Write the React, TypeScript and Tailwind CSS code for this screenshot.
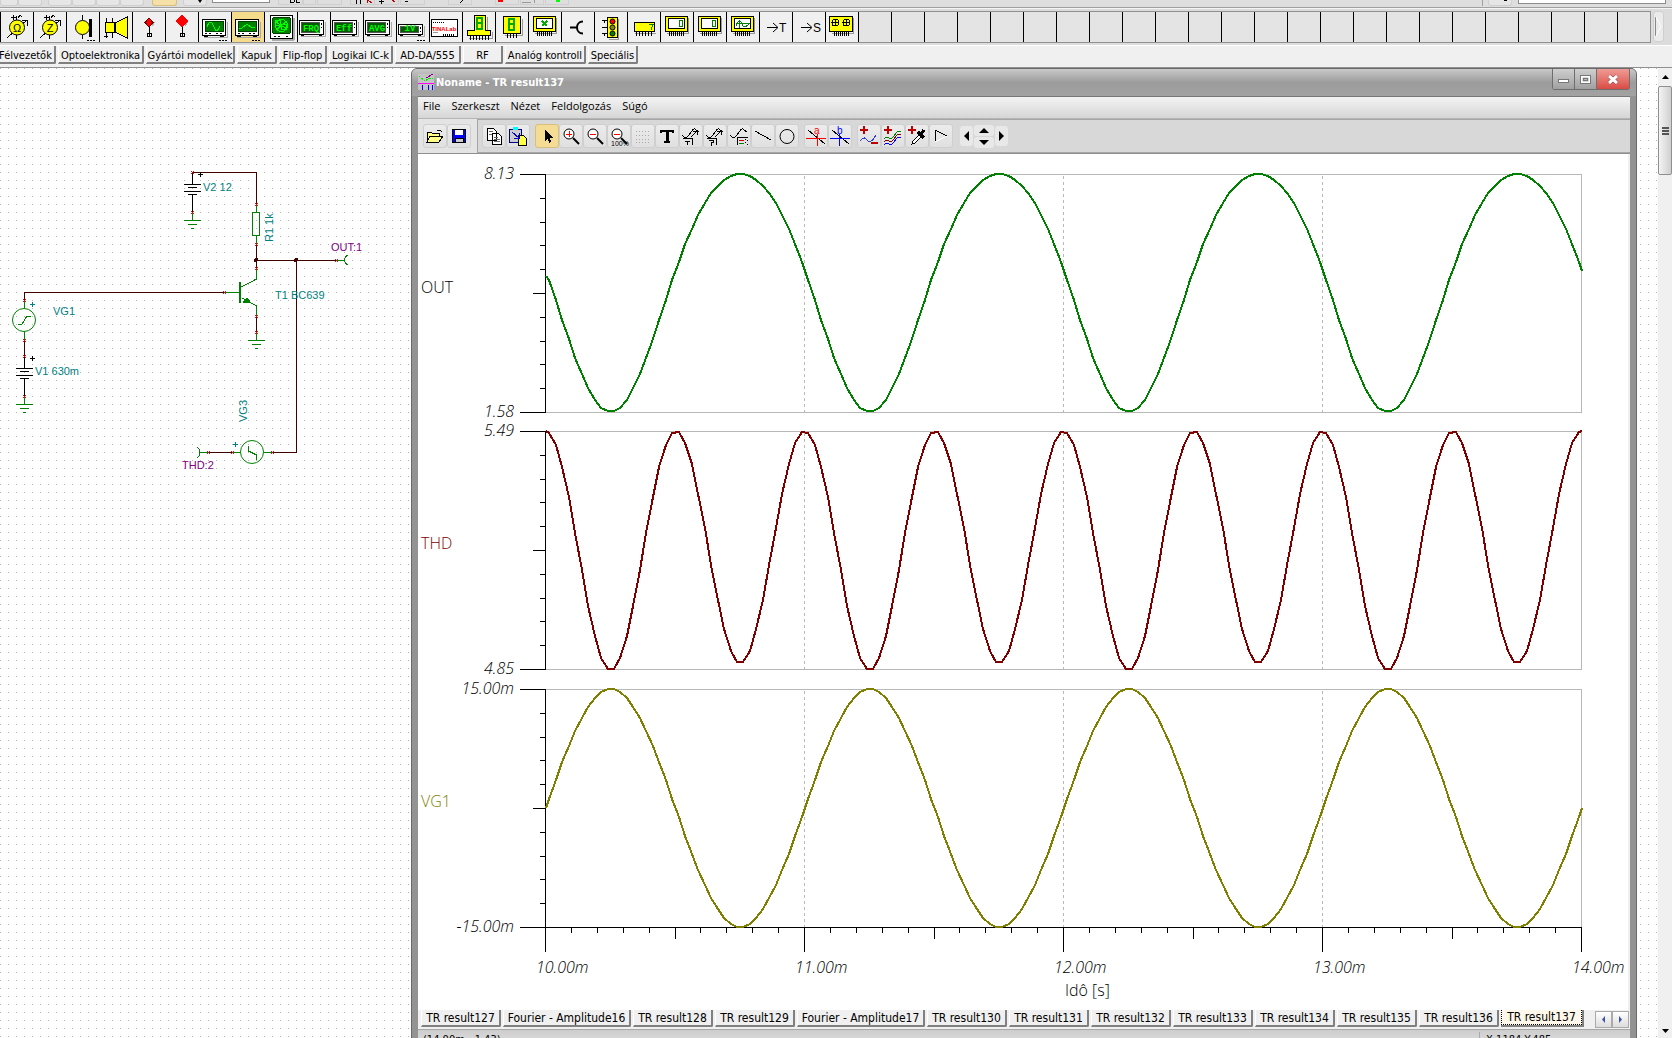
import React from "react";

type Kids = { children?: React.ReactNode };

/* ---------- component palette icons (33 x 30 cells) ---------- */

function Cell({ children }: Kids) {
  return (
    <svg viewBox="0 0 33 30" className="block h-[30px] w-[33px]" shapeRendering="crispEdges" fill="none" stroke="#000">
      {children}
    </svg>
  );
}

const Dots = () => <path d="M21 28.500h2M24 28.500h2M27 28.500h2" />;

function Meter({ letter }: { letter: string }) {
  return (
    <Cell>
      <path d="M16.500 4v4M16.500 23v4M7.500 25.500L26.500 8.500M22 8.500h5v5M11 5.500h5M13.500 3v5M18 5.500l2-2 2 1" />
      <circle cx="17" cy="15.500" r="7.500" fill="#ff0" shapeRendering="auto" />
      <text x="17" y="19.500" textAnchor="middle" stroke="none" fill="#000" className="font-['Liberation_Sans'] text-[11px]">
        {letter}
      </text>
    </Cell>
  );
}

function Probe({ big }: { big?: boolean }) {
  return (
    <Cell>
      <path d={big ? "M17 3l6 6-6 6-6-6z" : "M17 6l4 4.500-4 4.500-4-4.500z"} fill="#f00" stroke={big ? "#f00" : "#600"} />
      <path d="M20 14l3-4" stroke="#aaa" />
      <path d="M17.500 15v9M15.500 21.500h4v3h-4z" />
    </Cell>
  );
}

function Scope({ path }: { path: string }) {
  return (
    <Cell>
      <path d="M6 25.500h24M29.500 10v15" stroke="#aaa" />
      <rect x="4.500" y="7.500" width="23" height="16" fill="#fff" strokeWidth="1" />
      <rect x="7" y="9.500" width="18" height="10" fill="#008000" stroke="#004000" />
      <path d={path} stroke="#0f0" />
      <path d="M7 21.500h2M11 21.500h2M18 21.500h2M22 21.500h2M6 24.500h4M22 24.500h4" />
      <Dots />
    </Cell>
  );
}

function Readout({ label, small }: { label: string; small?: boolean }) {
  const y = small ? 12 : 8;
  const h = small ? 11 : 15;
  return (
    <Cell>
      <path d={`M4 ${y + h + 1.5}h25M28.500 ${y + 2}v${h}`} stroke="#aaa" />
      <rect x="2.500" y={y + 0.5} width="24" height={h - 1} fill="#fff" />
      <rect x="4.500" y={y + 2.5} width="18" height={h - 5} fill="#005a00" stroke="#555" />
      <path d={`M24.500 ${y + 3}v2M24.500 ${y + 7}v1M4 ${y + h + 0.5}h3M22 ${y + h + 0.5}h3`} />
      <text x="14" y={y + h - 4} textAnchor="middle" stroke="none" fill="#0f0" className="font-['Liberation_Mono'] text-[9px] font-bold">
        {label}
      </text>
      {small && <Dots />}
    </Cell>
  );
}

const pins = (x: number, y: number, n: number, step = 2) =>
  Array.from({ length: n }, (_, i) => `M${x + i * step + 0.5} ${y}v4`).join("");

function Instrument({ children }: Kids) {
  return (
    <Cell>
      <path d="M28.500 6v16M7 21.500h22" stroke="#999" />
      <rect x="5.500" y="4.500" width="22" height="15" fill="#ff0" />
      <rect x="8.500" y="6.500" width="16" height="10" rx="1" fill="#fff" />
      <path d={pins(9, 20, 8)} />
      {children}
    </Cell>
  );
}

const green = "#008000";

const paletteIcons: { name: string; icon: React.ReactNode }[] = [
  { name: "Ohmmeter", icon: <Meter letter="Ω" /> },
  { name: "Impedance meter", icon: <Meter letter="Z" /> },
  {
    name: "Lamp",
    icon: (
      <Cell>
        <path d="M16.500 3v5M16.500 23v4" />
        <circle cx="16.500" cy="15.500" r="7" fill="#ff0" shapeRendering="auto" />
        <rect x="23" y="7" width="3" height="18" fill="#000" stroke="none" />
        <Dots />
      </Cell>
    ),
  },
  {
    name: "Speaker",
    icon: (
      <Cell>
        <path d="M7.500 6v20M13.500 6v20M5 24.500h4" />
        <path d="M6.500 10.500h9v10h-9zM16 11l12-6v21l-12-6z" fill="#ff0" />
      </Cell>
    ),
  },
  { name: "Probe", icon: <Probe /> },
  { name: "Voltage pin", icon: <Probe big /> },
  { name: "Oscilloscope", icon: <Scope path="M9 15c2-6 5-6 7 0s4 4 6-1" /> },
  { name: "Signal analyzer", icon: <Scope path="M8 16h3l5-4 4 3 4 1" /> },
  {
    name: "XY recorder",
    icon: (
      <Cell>
        <path d="M8 27.500h22M29.500 6v22" stroke="#aaa" strokeWidth="2" />
        <rect x="6.500" y="3.500" width="22" height="23" rx="1" fill="#fff" />
        <rect x="8.500" y="5.500" width="18" height="16" rx="2" fill="#008000" stroke="#004000" />
        <g stroke="#0f0">
          <circle cx="17.500" cy="13.500" r="6" />
          <circle cx="14" cy="11" r="3" />
          <circle cx="20" cy="15" r="3" />
          <path d="M12 18l11-9M12 10l11 7" />
        </g>
        <path d="M10 24.500h2M14 24.500h2M22 24.500h2" />
      </Cell>
    ),
  },
  { name: "Frequency meter", icon: <Readout label="FRQ" /> },
  { name: "Effective value", icon: <Readout label="Eff" /> },
  { name: "Average value", icon: <Readout label="AVG" /> },
  { name: "Digital voltmeter", icon: <Readout label="1V" small /> },
  {
    name: "TINALab",
    icon: (
      <Cell>
        <rect x="2.500" y="7.500" width="26" height="17" fill="#fff" />
        <path d="M4 10.500h11" strokeDasharray="1 1" />
        <path d="M14 22.500h12" strokeWidth="2" strokeDasharray="1 1" />
        <path d="M4 20.500h5" stroke="#999" />
        <text x="15" y="19" textAnchor="middle" stroke="none" fill="#f00" className="font-['Liberation_Sans'] text-[6px] font-bold">
          TINALab
        </text>
      </Cell>
    ),
  },
  {
    name: "Hex display",
    icon: (
      <Cell>
        <path d="M14 20.500h13M25.500 5v14M30.500 20v6H7" stroke="#999" />
        <path d="M12.500 3.500h11v15h5v5H5.500v-5h7z" fill="#ff0" />
        <path d="M15 6h5v5h-5zM15 11h5v6h-5z" stroke="#0a0" strokeWidth="2" />
        <path d={pins(8, 24, 7, 3)} />
      </Cell>
    ),
  },
  {
    name: "Seven segment",
    icon: (
      <Cell>
        <path d="M27.500 7v16H10" stroke="#999" />
        <rect x="8.500" y="4.500" width="17" height="17" fill="#ff0" />
        <path d="M14 7h5v5h-5zM14 12h5v6h-5z" stroke="#0a0" strokeWidth="2" />
        <path d={pins(12, 22, 4, 3)} />
      </Cell>
    ),
  },
  { name: "Keypad", icon: <Instrument><path d="M14 9l5 5M19 9l-5 5" stroke="#0a0" strokeWidth="2" /></Instrument> },
  { name: "Junction", icon: <Cell><path d="M9 15.500h7M22 9.500c-4 0-6 3-6 6s2 6 6 6" strokeWidth="2" shapeRendering="auto" /></Cell> },
  {
    name: "Traffic light",
    icon: (
      <Cell>
        <path d="M24.500 7v20H15" stroke="#999" />
        <rect x="13.500" y="5.500" width="10" height="20" fill="#ff0" />
        <path d="M8 8.500h5M8 15.500h5M8 21.500h5M10.500 8v3M10.500 21v3" />
        <g shapeRendering="auto">
          <circle cx="18.500" cy="9.500" r="2.500" fill="#f00" />
          <circle cx="18.500" cy="15.500" r="2.500" fill="#880" />
          <circle cx="18.500" cy="21.500" r="2.500" fill={green} />
        </g>
      </Cell>
    ),
  },
  {
    name: "Data generator",
    icon: (
      <Cell>
        <path d="M8 21.500h21" stroke="#999" />
        <rect x="7.500" y="10.500" width="20" height="9" fill="#ff0" />
        <path d="M22 12.500h4l-2 5" stroke={green} />
        <path d={pins(9, 20, 6, 3)} />
      </Cell>
    ),
  },
  { name: "Digital signal", icon: <Instrument><rect x="19.500" y="8.500" width="3" height="6" rx="1" stroke={green} /></Instrument> },
  { name: "Digital clock", icon: <Instrument><rect x="19.500" y="8.500" width="3" height="6" rx="1" stroke={green} /></Instrument> },
  { name: "Logic analyzer", icon: <Instrument><path d="M10 11.500h14M13.500 8v8M10 14c3-8 5-5 6-2s3 4 7 0" stroke={green} /></Instrument> },
  {
    name: "Transfer T",
    icon: (
      <Cell>
        <path d="M8 15.500h10M14 11l5 4.500-5 4.500" shapeRendering="auto" />
        <text x="20" y="20" stroke="none" fill="#000" className="font-['Liberation_Sans'] text-[12px]">T</text>
      </Cell>
    ),
  },
  {
    name: "Transfer S",
    icon: (
      <Cell>
        <path d="M9 15.500h10M15 11l5 4.500-5 4.500" shapeRendering="auto" />
        <text x="21" y="20" stroke="none" fill="#000" className="font-['Liberation_Sans'] text-[12px]">S</text>
      </Cell>
    ),
  },
  {
    name: "Connector",
    icon: (
      <Cell>
        <path d="M28.500 6v16M7 21.500h22" stroke="#999" />
        <rect x="4.500" y="4.500" width="23" height="15" fill="#ff0" />
        <g>
          <circle cx="10.500" cy="10.500" r="3.500" />
          <circle cx="21.500" cy="10.500" r="3.500" />
          <path d="M7 10.500h7M10.500 7v7M18 10.500h7M21.500 7v7" />
        </g>
        <path d={pins(9, 20, 8)} />
      </Cell>
    ),
  },
];

/* ---------- result window toolbar icons (24 x 24 buttons) ---------- */

function Tool({ name, children, active }: Kids & { name: string; active?: boolean }) {
  return (
    <button
      aria-label={name}
      className={
        active
          ? "h-6 w-6 shrink-0 rounded-[3px] border border-[#d9bf7c] bg-[#f5dc95]"
          : "h-6 w-6 shrink-0 rounded-[3px] border border-[#cfcfcf] bg-linear-to-b from-[#ececec] to-[#e0e0e0]"
      }
    >
      <svg viewBox="0 0 22 22" className="block h-[22px] w-[22px]" fill="none" stroke="#000" shapeRendering="crispEdges">
        {children}
      </svg>
    </button>
  );
}

function Lens({ children }: Kids) {
  return (
    <>
      <circle cx="9" cy="9" r="5" fill="#fff" shapeRendering="auto" />
      <path d="M13 13l6 6" strokeWidth="2" shapeRendering="auto" />
      {children}
    </>
  );
}

const curve = "M2 10c3 4 5 3 7 0s4-7 6-6 2 3 4 2";
const plus = <path d="M2 5h8M6 1v8" stroke="#c00000" strokeWidth="2" />;

function Group({ children }: Kids) {
  return <div className="flex items-center">{children}</div>;
}

function ResultToolbar() {
  return (
    <div className="flex h-[35px] shrink-0 border-b border-[#8f8f8f] bg-[#d8d8d8]">
      <div className="flex w-[59px] shrink-0 items-center bg-[#e4e4e4] pl-[5px]">
        <Tool name="Open">
          <path d="M3 17V7h4l1 1h7v3M3 17l3-6h13l-4 6z" fill="#ff8" />
          <path d="M13 5h3l2 2" />
        </Tool>
        <Tool name="Save">
          <rect x="4.500" y="4.500" width="13" height="13" fill="#00f" />
          <rect x="7" y="5" width="8" height="5" fill="#fff" stroke="none" />
          <rect x="7" y="13" width="8" height="4" fill="#ccc" />
        </Tool>
      </div>
      <div className="flex min-w-0 flex-1 items-center gap-[5px] border-t border-b border-l border-[#a6a6a6] pl-1">
        <Group>
          <Tool name="Copy">
            <path d="M4.500 3.500h6l3 3v9h-9zM9.500 8.500h6l3 3v8h-9z" fill="#fff" />
            <path d="M6 6.500h4M6 9.500h3M11 12.500h4M11 14.500h6M11 16.500h6" stroke="#666" />
          </Tool>
          <Tool name="Paste">
            <rect x="2.500" y="4.500" width="12" height="13" fill="#ccc" stroke="#008" />
            <rect x="6" y="2" width="5" height="3" fill="#0ff" stroke="none" />
            <path d="M11.500 10.500h5l3 3v7h-8z" fill="#ff4" />
            <path d="M5 7l7 6M12 8v5H7" stroke="#00c" />
          </Tool>
        </Group>
        <Group>
          <Tool name="Select" active>
            <path d="M9.500 6v9l2-2 2 4 1-1-2-4h3z" fill="#000" />
          </Tool>
          <Tool name="Zoom in"><Lens><path d="M6 9h6M9 6v6" stroke="#f00" /></Lens></Tool>
          <Tool name="Zoom out"><Lens><path d="M6 9h6" stroke="#f00" /></Lens></Tool>
          <Tool name="Zoom 100%">
            <Lens><path d="M6 9h6" stroke="#f00" /></Lens>
            <text x="3" y="21" stroke="none" fill="#000" className="font-['Liberation_Sans'] text-[7px]">100%</text>
          </Tool>
          <Tool name="Grid">
            <path d="M4 6.500h14M4 10.500h14M4 14.500h14M4 17.500h14" stroke="#aaa" strokeDasharray="1 2" />
          </Tool>
          <Tool name="Text">
            <path d="M5 8V6h12v2M11 6v11M8 17h6" strokeWidth="2" />
            <path d="M11 6v11" strokeWidth="3" />
          </Tool>
          <Tool name="Label curve">
            <path d={curve} /><path d="M11 12l6-6M13 6h4v4M3 13.500h9v6M5 16.500h5M7.500 16v4" />
          </Tool>
          <Tool name="Query curve">
            <path d={curve} /><path d="M11 12l6-6M13 6h4v4M3 13.500h9v6M5 15.500h4v2h-2v1M7 19v2" />
          </Tool>
          <Tool name="Legend">
            <path d={curve} /><path d="M9 20V12.500h11M17 14v1M17 17v1M19 15v1M19 19v1" />
            <path d="M11 15.500h5" stroke="#c00" />
            <path d="M11 18.500h5" stroke={green} />
          </Tool>
          <Tool name="Line"><path d="M3 6l16 9" /></Tool>
          <Tool name="Circle"><circle cx="11" cy="11.500" r="7" shapeRendering="auto" /></Tool>
        </Group>
        <Group>
          <Tool name="Cursor a">
            <path d="M3 5l17 14" />
            <path d="M1 13.500h20M12.500 9v12" stroke="#f00" />
            <text x="9" y="9" stroke="none" fill="#f00" className="font-['Liberation_Sans'] text-[10px]">a</text>
          </Tool>
          <Tool name="Cursor b">
            <path d="M3 5l17 14" />
            <path d="M1 13.500h20M10.500 9v12" stroke="#00f" />
            <text x="8" y="9" stroke="none" fill="#00f" className="font-['Liberation_Sans'] text-[10px]">b</text>
          </Tool>
        </Group>
        <Group>
          <Tool name="Add or remove curve">
            {plus}
            <path d="M2 16c3-4 5-4 7-1s5 2 9-5" stroke="#3040d0" />
            <path d="M13 18h7" stroke="#c00000" strokeWidth="2" />
          </Tool>
          <Tool name="Add curves">
            {plus}
            <path d="M2 14c5-5 6 4 10-3s5-4 7-4" stroke={green} />
            <path d="M2 17c5-5 6 4 10-3s5-4 7-4" stroke="#800000" />
            <path d="M2 20c5-5 6 4 10-3s5-4 7-4" stroke="#00f" />
          </Tool>
          <Tool name="Pick curve">
            {plus}
            <path d="M6 19l1-3 7-7 2 2-7 7z" fill="#fff" />
            <path d="M12 7l6 6M14 10l4-5" strokeWidth="3" />
          </Tool>
          <Tool name="Amplifier">
            <path d="M5 17V5l12 6" />
            <path d="M5 17l12-6" stroke="#fff" />
          </Tool>
        </Group>
        <div className="flex items-center gap-px pl-0.5">
          <button aria-label="Previous" className="h-5 w-[13px] rounded-[3px] bg-[#e8e8e8]">
            <svg viewBox="0 0 13 20" className="block h-5 w-[13px]"><path d="M9 5v10L4 10z" /></svg>
          </button>
          <div className="flex w-5 flex-col gap-px">
            <button aria-label="Up" className="h-[11px] rounded-[3px] bg-[#e8e8e8]">
              <svg viewBox="0 0 20 11" className="block h-[11px] w-5"><path d="M5 8h10l-5-5z" /></svg>
            </button>
            <button aria-label="Down" className="h-[11px] rounded-[3px] bg-[#e8e8e8]">
              <svg viewBox="0 0 20 11" className="block h-[11px] w-5"><path d="M5 3h10l-5 5z" /></svg>
            </button>
          </div>
          <button aria-label="Next" className="h-5 w-[13px] rounded-[3px] bg-[#e8e8e8]">
            <svg viewBox="0 0 13 20" className="block h-5 w-[13px]"><path d="M4 5v10l5-5z" /></svg>
          </button>
        </div>
      </div>
    </div>
  );
}

/* ---------- circuit schematic ---------- */

const pinMarks = [
  [192, 172], [192, 212], [256, 204], [256, 244], [336, 260], [256, 268], [224, 292], [24, 300],
  [256, 316], [256, 332], [24, 340], [24, 356], [24, 396], [208, 452], [232, 452], [272, 452],
];

function Ground({ x, y }: { x: number; y: number }) {
  return <path d={`M${x + 0.5} ${y}v8M${x - 8} ${y + 8.5}h17M${x - 4} ${y + 12.5}h9M${x - 1} ${y + 16.5}h3`} stroke={green} />;
}

function Schematic() {
  return (
    <svg className="block h-full w-full" fill="none" shapeRendering="crispEdges">
      <defs>
        <pattern id="dots" width="8" height="8" patternUnits="userSpaceOnUse">
          <rect x="0" y="0" width="1" height="1" fill="#b4b4b4" />
        </pattern>
      </defs>
      <rect width="100%" height="100%" fill="url(#dots)" />
      <g transform="translate(0 -68)">
        <g stroke="#400000">
          <path d="M192 172.500h64.500V204M256.500 244v24M256 260.500h80M296.500 260v192.500H272M24.500 300v-7.500H224M256.500 316v16M24.500 340v16M208 452.500h24" />
          <circle cx="256" cy="260" r="1.500" fill="#400000" />
          <circle cx="296" cy="260" r="1.500" fill="#400000" />
        </g>
        <g stroke="#000">
          <path d="M192.500 172v12M184 184.500h17M188 187.500h9M184 191.500h17M188 194.500h9M192.500 195v17M198 174.500h5M200.500 172v5" />
          <path d="M24.500 356v12M16 368.500h17M20 371.500h9M16 375.500h17M20 378.500h9M24.500 379v17M30 358.500h5M32.500 356v5" />
        </g>
        <g stroke={green}>
          <path d="M256.500 204v8M252.500 212.500h7v23h-7zM256.500 236v8M256.500 268v11l-15 8M224 292.500h16M242 298l14.500 8v10" />
          <path d="M240 282v21" strokeWidth="2" />
          <path d="M251 303l-8-1 4-4z" fill={green} />
          <path d="M336 260.500h8M348 255c-5 3-5 7 0 10M208 452.500h-8M197 447c4 3 4 8 0 11M24.500 300v8M24.500 332v8M18 324h4l5-8h4M232 452.500h8M264 452.500h8M248.500 446v5l8 4v5" />
          <circle cx="24" cy="320" r="11.500" shapeRendering="auto" />
          <circle cx="252" cy="452" r="11.500" shapeRendering="auto" />
        </g>
        <path d="M30 304.500h5M32.500 302v5M233 444.500h5M235.500 442v5" stroke="#008080" />
        <Ground x={192} y={212} />
        <Ground x={256} y={332} />
        <Ground x={24} y={396} />
        {pinMarks.map(([x, y]) => (
          <path key={`${x}-${y}`} d={`M${x - 1} ${y - 0.5}h1M${x + 1} ${y - 0.5}h1M${x - 1} ${y + 1.5}h1M${x + 1} ${y + 1.5}h1M${x} ${y + 0.5}h1`} stroke="#f00" />
        ))}
        <g className="font-['Liberation_Sans',sans-serif] text-[11px]" fill="#008080">
          <text x="203" y="191">V2 12</text>
          <text x="275" y="299">T1 BC639</text>
          <text x="53" y="315">VG1</text>
          <text x="35" y="375">V1 630m</text>
          <text transform="translate(273 242) rotate(-90)">R1 1k</text>
          <text transform="translate(247 422) rotate(-90)">VG3</text>
          <text x="331" y="251" fill="#800080">OUT:1</text>
          <text x="182" y="469" fill="#800080">THD:2</text>
        </g>
      </g>
    </svg>
  );
}

/* ---------- transient result chart ---------- */

const X0 = 545;
const PERIOD = 259;
const STEPS = 40;

function trace(fn: (w: number) => number, first?: number) {
  const last = STEPS * 4;
  const pts: string[] = [];
  for (let i = 0; i <= last + 1; i++) {
    const s = Math.min(Math.max(i - 0.5, 0), last);
    const y = i === 0 && first !== undefined ? first : Math.round(fn((2 * Math.PI * s) / STEPS));
    pts.push(`${Math.round(X0 + 1 + (s * PERIOD) / STEPS)},${y}`);
  }
  return pts.join(" ");
}

const plots = [
  { name: "OUT", top: 174, hi: "8.13", lo: "1.58", color: "#008000", ink: "#000", nameY: 293, pts: trace((w) => 282 + 119 * Math.sin(w) - 11 * Math.cos(2 * w), 276) },
  { name: "THD", top: 431, hi: "5.49", lo: "4.85", color: "#800000", ink: "#800000", nameY: 549, pts: trace((w) => 549 - 118 * Math.cos(2 * w) + 3.5 * Math.sin(w)) },
  { name: "VG1", top: 689, hi: "15.00m", lo: "-15.00m", color: "#808000", ink: "#808000", nameY: 807, pts: trace((w) => 808 - 119 * Math.sin(w)) },
];

function Chart() {
  const xTicks = Array.from({ length: 41 }, (_, i) => {
    const len = i % 10 === 0 ? 25 : i % 5 === 0 ? 12 : 6;
    return `M${Math.round(X0 + i * 25.9) + 0.5} 927v${len}`;
  }).join("");
  return (
    <svg viewBox="418 154 1210 856" className="block h-full w-full" fill="none" shapeRendering="crispEdges">
      {plots.map((p) => (
        <g key={p.name}>
          <path d={`M546 ${p.top + 0.5}h1035.500v238H546`} stroke="#b8b8b8" />
          <path d={[1, 2, 3].map((n) => `M${X0 + n * PERIOD + 0.5} ${p.top + 2}v236`).join("")} stroke="#b8b8b8" strokeDasharray="3 3" />
        </g>
      ))}
      <path d={xTicks + "M520 927.500h1061"} stroke="#000" />
      {plots.map((p) => (
        <g key={p.name}>
          <path
            d={
              `M545.500 ${p.top}v239` +
              Array.from({ length: 11 }, (_, i) => {
                const len = i % 10 === 0 ? 25 : i === 5 ? 12 : 5;
                return `M${545 - len} ${Math.round(p.top + i * 23.8) + 0.5}h${len}`;
              }).join("")
            }
            stroke="#000"
          />
          <polyline points={p.pts} stroke={p.color} strokeWidth="2" />
          <g className="font-['Open_Sans',sans-serif] text-[16px] font-light">
            <g className="italic" fill="#000" textAnchor="end">
              <text x="514" y={p.top + 5}>{p.hi}</text>
              <text x="514" y={p.top + 243}>{p.lo}</text>
            </g>
            <text x="421" y={p.nameY} fill={p.ink}>{p.name}</text>
          </g>
        </g>
      ))}
      <g className="font-['Open_Sans',sans-serif] text-[16px] font-light" fill="#000">
        <g className="italic">
          {["10.00m", "11.00m", "12.00m", "13.00m", "14.00m"].map((t, i) => (
            <text key={t} x={536 + i * PERIOD} y="973">{t}</text>
          ))}
        </g>
        <text x="1065" y="996">Idô [s]</text>
      </g>
    </svg>
  );
}

/* ---------- page ---------- */

const categories = [
  { name: "Félvezetők", w: "w-[60px] -ml-1" },
  { name: "Optoelektronika", w: "w-[86px]" },
  { name: "Gyártói modellek", w: "w-[89px]" },
  { name: "Kapuk", w: "w-10" },
  { name: "Flip-flop", w: "w-12" },
  { name: "Logikai IC-k", w: "w-16" },
  { name: "AD-DA/555", w: "w-[66px]" },
  { name: "RF", w: "w-10" },
  { name: "Analóg kontroll", w: "w-[81px]" },
  { name: "Speciális", w: "w-[50px]" },
];

const resultTabs = [
  "TR result127", "Fourier - Amplitude16", "TR result128", "TR result129", "Fourier - Amplitude17", "TR result130",
  "TR result131", "TR result132", "TR result133", "TR result134", "TR result135", "TR result136",
];

function TopStrip() {
  const btn = "h-1.5 w-6 rounded-b-[3px] border border-t-0 border-[#cfcfcf] bg-[#e6e6e6]";
  return (
    <div className="flex h-2 shrink-0 items-start overflow-hidden border-b border-[#a0a0a0] bg-[#dedede]">
      <div className="flex w-[48px]">
        <div className="h-1.5 w-[18px] rounded-b-[3px] border border-t-0 border-[#cfcfcf] bg-[#e6e6e6]" />
        <div className={btn} />
      </div>
      <div className="flex w-[104px]">
        <div className={btn} /><div className={btn} /><div className={btn} /><div className={btn} />
      </div>
      <div className="h-1.5 w-[25px] rounded-b-[3px] border border-t-0 border-[#d9bf7c] bg-[#f5e0a8]" />
      <div className="ml-1.5 flex h-1.5 w-6 justify-end rounded-b-[3px] border border-t-0 border-[#cfcfcf] bg-[#e6e6e6] pr-1">
        <svg viewBox="0 0 4 3" className="h-[3px] w-1"><path d="M0 0h4L2 3z" /></svg>
      </div>
      <div className="ml-[5px] h-[3px] w-[58px] border border-t-0 border-[#8c8c8c] bg-white" />
      <svg viewBox="270 0 310 7" className="h-[7px] w-[310px]" shapeRendering="crispEdges" fill="none" stroke="#000">
        <path d="M278.500 0v4h24v-4M303.500 0v4h12v-4M317.500 0v4h24v-4M350.500 0v4h24v-4M374.500 0v4h24v-4M400.500 0v4h24v-4M448.500 0v4h23v-4M495.500 0v4h23v-4M520.500 0v4h23v-4M545.500 0v4h23v-4" stroke="#cfcfcf" />
        <path d="M290.500 0v2.500h3l1-1V0M300 2.500h-3l-1-1V0M356.500 0v4M360.500 0v4M381.500 0v4M379 1.500h5M460 3l3-3M405 1.500h3" />
        <path d="M367 3V0M368 0l4 3M392 0l3 2" stroke="#c00000" />
        <path d="M498 1h5" stroke="#f00" strokeWidth="2" />
        <path d="M522 2h9M534 0v3" stroke="#999" />
        <path d="M556 1h4" stroke="#0f0" strokeWidth="2" />
      </svg>
      <div className="ml-auto flex w-[190px] gap-1.5 border-l border-[#a0a0a0] pl-[5px]">
        <div className="flex h-1.5 w-6 justify-end rounded-b-[3px] border border-t-0 border-[#cfcfcf] bg-[#e6e6e6] pr-1">
          <div className="h-px w-[3px] bg-black" />
        </div>
        <div className="h-1 w-[148px] border border-t-0 border-[#8c8c8c] bg-white" />
      </div>
    </div>
  );
}

function Palette() {
  return (
    <div className="flex h-[38px] shrink-0 items-start border-t border-b border-t-[#f4f4f4] border-b-[#fff] bg-[#dcdcdc] pt-0.5 pr-2">
      <div className="flex h-8 min-w-0 flex-1 overflow-hidden border-y border-r border-[#909090] bg-[#e4e4e4]">
        {paletteIcons.map((p, i) => (
          <button
            key={p.name}
            aria-label={p.name}
            className={i === 7 ? "w-[33px] shrink-0 border-l border-black bg-[#f5dc8c]" : "w-[33px] shrink-0 border-l border-black bg-[#f0f0f0]"}
          >
            <span className="-ml-px block">{p.icon}</span>
          </button>
        ))}
        {Array.from({ length: 24 }, (_, i) => (
          <div key={i} className="w-[33px] shrink-0 border-l border-black" />
        ))}
      </div>
      <button aria-label="Scroll palette" className="ml-0.5 h-[31px] w-[11px] rounded-[3px] border border-[#cfcfcf] bg-[#ebebeb]">
        <svg viewBox="0 0 9 29" className="block h-[29px] w-[9px]" fill="none">
          <path d="M1.500 5v19" stroke="#888" />
          <path d="M2 5l5 9.500-5 9.500" stroke="#fff" />
        </svg>
      </button>
    </div>
  );
}

const tabBase =
  "shrink-0 whitespace-nowrap rounded-br-[2px] border-r-2 border-b-2 border-l border-l-white border-r-[#808080] border-b-[#808080] text-center text-black";

function ResultWindow() {
  return (
    <div className="absolute top-0 right-[21px] -bottom-3 left-[411px] flex flex-col rounded-t-[6px] border border-[#6a6a6a] bg-[#939393] px-1.5">
      <div className="-mx-1.5 flex h-[27px] shrink-0 items-start rounded-t-[5px] bg-linear-to-b from-[#c9c9c9] via-[#9c9c9c] to-[#a2a2a2] pr-1.5 pl-1.5">
        <svg viewBox="0 0 16 16" className="mt-[5px] h-4 w-4" shapeRendering="crispEdges" fill="none">
          <rect width="16" height="16" fill="#c4c4c4" />
          <path d="M0 9.500h16" stroke="#f0f" />
          <path d="M1 2l6 5 3-2 5-1" stroke="#0e0" strokeDasharray="2 1" />
          <path d="M8 4l7-4" stroke="#800080" />
          <path d="M4.500 11v5M10.500 11v5M14.500 11v5" stroke="#00f" />
        </svg>
        <h1 className="ml-0.5 flex-1 truncate pt-[5px] font-['DejaVu_Sans_Condensed','DejaVu_Sans',sans-serif] text-[11px] leading-[18px] font-bold text-white">
          Noname - TR result137
        </h1>
        <div className="flex h-[21px] rounded-b-[3px] border border-t-0 border-[#6e6e6e]">
          <button aria-label="Minimize" className="w-[22px] border-r border-[#6e6e6e] bg-linear-to-b from-[#cfcfcf] to-[#a0a0a0]">
            <svg viewBox="0 0 21 20" className="block h-5 w-[21px]"><rect x="5.500" y="10.500" width="10" height="3" fill="#fff" stroke="#777" /></svg>
          </button>
          <button aria-label="Maximize" className="w-[22px] border-r border-[#6e6e6e] bg-linear-to-b from-[#cfcfcf] to-[#a0a0a0]">
            <svg viewBox="0 0 21 20" className="block h-5 w-[21px]" fill="none">
              <rect x="6.500" y="7.500" width="8" height="6" stroke="#fff" strokeWidth="2" />
              <rect x="5.500" y="6.500" width="10" height="8" stroke="#777" />
              <rect x="8.500" y="9.500" width="4" height="2" stroke="#777" />
            </svg>
          </button>
          <button aria-label="Close" className="w-8 bg-linear-to-b from-[#ee9b95] to-[#d94a45]">
            <svg viewBox="0 0 32 20" className="block h-5 w-8"><path d="M12 7l8 7M20 7l-8 7" stroke="#7a3030" strokeWidth="4" /><path d="M12 7l8 7M20 7l-8 7" stroke="#fff" strokeWidth="3" /></svg>
          </button>
        </div>
      </div>
      <div className="flex min-h-0 flex-1 flex-col border-t border-[#777] bg-[#efefef]">
        <nav className="flex h-[22px] shrink-0 items-center gap-[11px] border-b border-[#b5b5b5] bg-linear-to-b from-[#f4f4f4] to-[#d6d6d6] pb-0.5 pl-[5px] font-['Open_Sans',sans-serif] text-[11px] text-black">
          {["File", "Szerkeszt", "Nézet", "Feldolgozás", "Súgó"].map((m) => (
            <button key={m}>{m}</button>
          ))}
        </nav>
        <ResultToolbar />
        <div className="min-h-0 flex-1 border-r-2 border-[#efefef] bg-white">
          <Chart />
        </div>
        <div className="flex h-[19px] shrink-0 overflow-hidden bg-[#f0f0f0] pl-[3px] font-['DejaVu_Sans_Condensed','DejaVu_Sans',sans-serif] text-[12px]">
          <div role="tablist" className="flex min-w-0 flex-1 gap-0.5 overflow-hidden">
            {resultTabs.map((t) => (
              <button
                key={t}
                role="tab"
                className={`${tabBase} h-[17px] bg-[#f0f0f0] leading-[16px] ${t.startsWith("F") ? "w-32" : "w-20"}`}
              >
                {t}
              </button>
            ))}
            <button role="tab" aria-selected="true" className="h-[17px] w-[83px] shrink-0 border-r-2 border-b-2 border-[#808080] bg-[#fff8ea] whitespace-nowrap">
              <span className="block h-[15px] border border-t-0 border-dotted border-black leading-[14px]">TR result137</span>
            </button>
          </div>
          <div className="flex py-px pr-px">
            <button aria-label="Previous tabs" className="w-[17px] border border-[#aaa] bg-linear-to-b from-white to-[#ddd]">
              <svg viewBox="0 0 15 15" className="block h-[15px] w-[15px]"><path d="M9 4v7L6 7.500z" fill="#3a55a0" /></svg>
            </button>
            <button aria-label="Next tabs" className="w-[17px] border border-[#aaa] bg-linear-to-b from-white to-[#ddd]">
              <svg viewBox="0 0 15 15" className="block h-[15px] w-[15px]"><path d="M6 4v7l3-3.500z" fill="#3a55a0" /></svg>
            </button>
          </div>
        </div>
        <div className="flex h-5 shrink-0 border-t border-[#a8a8a8] bg-linear-to-b from-[#cdcdcd] to-[#e4e4e4] pt-0.5 font-['DejaVu_Sans_Condensed','DejaVu_Sans',sans-serif] text-[11px] leading-4 text-black">
          <span className="flex-1 pl-[5px]">(14.00m, -1.43)</span>
          <span className="w-[151px] border-l border-[#aaa] pl-1.5">X:1184 Y:485</span>
        </div>
      </div>
    </div>
  );
}

export default function App() {
  return (
    <div className="flex h-screen flex-col overflow-hidden bg-[#f0f0f0]">
      <TopStrip />
      <Palette />
      <div
        role="tablist"
        className="flex h-[22px] shrink-0 gap-0.5 overflow-hidden border-b border-[#909090] bg-[#f0f0f0] font-['DejaVu_Sans_Condensed','DejaVu_Sans',sans-serif] text-[11px]"
      >
        {categories.map((c) => (
          <button key={c.name} role="tab" className={`${tabBase} h-[18px] bg-[#f0f0f0] pt-px leading-[17px] ${c.w}`}>
            {c.name}
          </button>
        ))}
      </div>
      <main className="flex min-h-0 flex-1">
        <div className="relative min-w-0 flex-1 overflow-hidden bg-white">
          <Schematic />
          <ResultWindow />
        </div>
        <div className="flex w-3.5 shrink-0 flex-col items-center bg-[#f0f0f0]">
          <svg viewBox="0 0 14 18" className="h-[18px] w-3.5"><path d="M4 11h7L7.500 7z" /></svg>
          <div className="flex h-[89px] w-full flex-col items-center justify-center gap-px rounded-[2px] border border-[#8f8f8f] bg-linear-to-r from-[#f4f4f4] to-[#cfcfcf]">
            <div className="h-0.5 w-[7px] bg-[#555]" />
            <div className="h-0.5 w-[7px] bg-[#555]" />
            <div className="h-0.5 w-[7px] bg-[#555]" />
          </div>
          <svg viewBox="0 0 14 18" className="mt-auto h-[18px] w-3.5"><path d="M4 9h7l-3.500 4z" /></svg>
        </div>
      </main>
    </div>
  );
}
